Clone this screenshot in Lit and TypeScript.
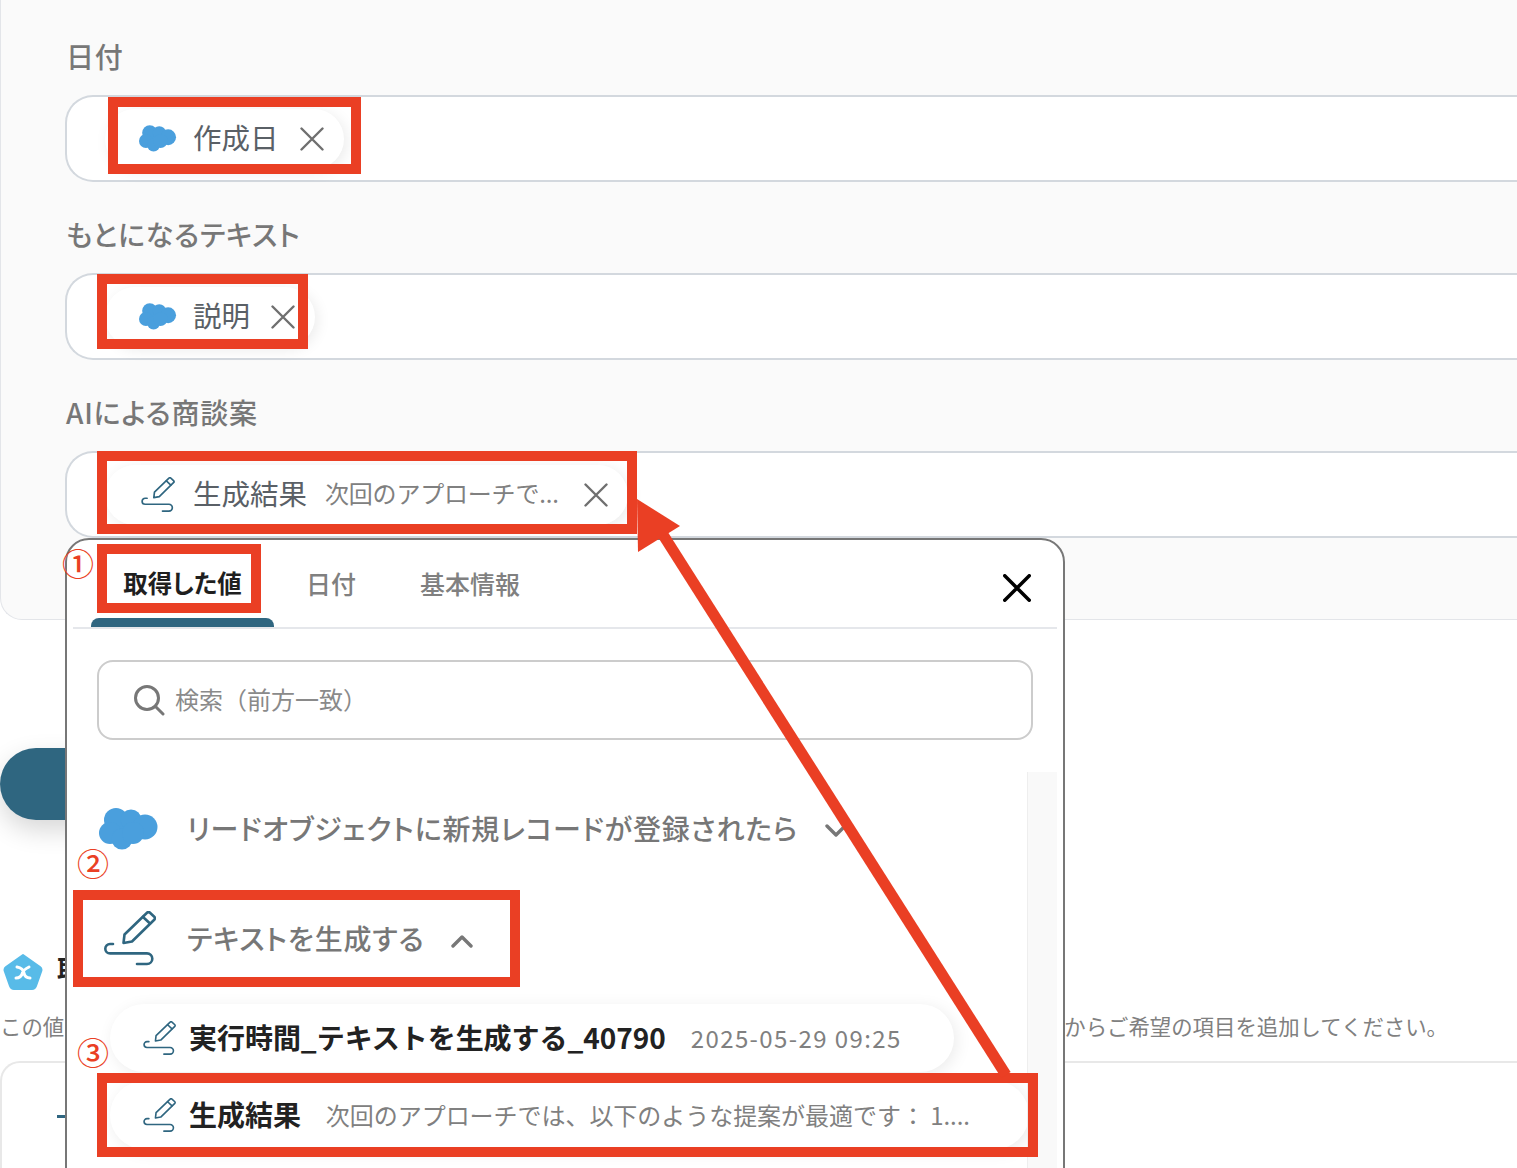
import { LitElement, html, css, svg } from "lit";
import { customElement } from "lit/decorators.js";

const cloud = (w: number, h: number) => html`<svg class="ico" width=${w} height=${h} viewBox="0 0 60 42" fill="#4a9fdd">
  <circle cx="17" cy="12" r="12"/><circle cx="32" cy="12" r="10.5"/><circle cx="46" cy="19" r="12.5"/>
  <circle cx="11" cy="25" r="11"/><circle cx="23" cy="31" r="10.5"/><circle cx="34" cy="25" r="11"/></svg>`;

const pen = (w: number, h: number, sw: number) => html`<svg class="ico pen" width=${w} height=${h} viewBox="0 0 52 56" fill="none" stroke="#2f6680" stroke-width=${sw} stroke-linecap="round" stroke-linejoin="round">
  <path d="M19.5 32 L28 30.5 L50.5 8.5 A2 2 0 0 0 50.5 6 L46 1.8 A2 2 0 0 0 43 1.8 L20.5 23.5 Z"/>
  <path d="M39 6 L46 12.5"/>
  <path d="M9 33 H6 A4.6 4.6 0 0 0 6 42.4 H43 A5.2 5.2 0 0 1 43 53 H33"/></svg>`;

const cross = (s: number, color: string, sw: number) => html`<svg class="ico x" width=${s} height=${s} viewBox="0 0 24 24" fill="none" stroke=${color} stroke-width=${sw} stroke-linecap="round"><path d="M1.5 1.5 L22.5 22.5 M22.5 1.5 L1.5 22.5"/></svg>`;

const chevron = (up: boolean) => html`<svg class="ico chev" width="22" height="14" viewBox="0 0 22 14" fill="none" stroke="#777" stroke-width="3.4" stroke-linecap="round" stroke-linejoin="round"><path d=${up ? "M2 12 L11 3 L20 12" : "M2 2 L11 11 L20 2"}/></svg>`;

@customElement("app-root")
export class AppRoot extends LitElement {
  static styles = css`
    :host { display: block; position: relative; width: 1517px; height: 1168px; overflow: hidden; background: #fff;
      font-family: "Noto Sans CJK JP", "Noto Sans", sans-serif; color: #777; }
    .ico { display: block; flex: none; }
    .panel { box-sizing: border-box; height: 620px; padding: 38px 0 0 65px; background: #fafafa; border: 1px solid #e3e5e9; border-top: 0; border-right: 0; border-bottom-left-radius: 22px; display: flex; flex-direction: column; gap: 34px; }
    .field { display: flex; flex-direction: column; gap: 19px; }
    .label { height: 38px; line-height: 36px; font-size: 28px; font-weight: 500; color: #777; font-feature-settings: "palt"; letter-spacing: .75px; }
    .input { box-sizing: border-box; margin-left: -1px; height: 87px; background: #fff; border: 2px solid #d3d8de; border-right: 0; border-radius: 28px 0 0 28px; padding: 0 0 0 38px; display: flex; align-items: center; }
    .chip { height: 60px; border-radius: 30px; background: #fff; box-shadow: 3px 3px 14px rgba(0,0,0,.08); padding: 0 20px 0 34px; display: flex; align-items: center; font-size: 28.5px; color: #5a6066; }
    .chip .name { margin-left: 16px; margin-bottom: 4px; white-space: nowrap; }
    .chip .detail { margin-left: 18px; margin-bottom: 4px; font-size: 24px; letter-spacing: -.2px; color: #808080; white-space: nowrap; }
    .chip .x { margin-left: 21px; }
    .chip .detail + .x { margin-left: 25px; }
    .chip .pen { margin-left: 2px; }
    .chip .pen + .name { margin-left: 18px; }

    .below { padding-top: 128px; }
    .cta { width: 400px; height: 72px; border-radius: 36px; background: #2f6680; box-shadow: 0 10px 26px rgba(0,0,0,.16); }
    .heading { display: flex; align-items: center; margin-top: 131px; height: 42px; padding-left: 3px; font-size: 26px; font-weight: 700; color: #222; gap: 14px; }
    .heading span { margin-bottom: 10px; }
    .note { display: flex; justify-content: space-between; margin-top: 17px; padding-right: 69px; height: 32px; line-height: 32px; font-size: 21.4px; color: #808080; white-space: nowrap; }
    .box { box-sizing: border-box; margin-top: 19px; height: 200px; border: 2px solid #e8e8e8; border-right: 0; border-radius: 20px 0 0 0; padding: 52px 0 0 55px; }
    .plus { width: 30px; height: 3px; background: #2f6680; }

    .pop { position: absolute; left: 65px; top: 538px; box-sizing: border-box; width: 1000px; height: 760px; background: #fff; border: 2px solid #777; border-radius: 24px 24px 0 0; display: flex; flex-direction: column; }
    .tabs { height: 87px; margin: 0 6px 0 6px; padding-left: 18px; border-bottom: 2px solid #e5e7eb; display: flex; align-items: stretch; position: relative; flex: none; }
    .tab { padding: 0 32px; height: 87px; box-sizing: border-box; padding-bottom: 2px; display: flex; align-items: center; font-size: 25px; font-weight: 500; color: #808080; position: relative; font-feature-settings: "palt"; }
    .tab.on { color: #1f1f1f; font-weight: 700; font-size: 24.5px; width: 183px; justify-content: center; padding: 0 0 2px; }
    .tab.on::after { content: ""; position: absolute; left: 0; right: 0; bottom: 0; height: 9px; background: #2f6680; border-radius: 8px 8px 0 0; }
    .close { position: absolute; right: 26px; top: 34px; }
    .search { box-sizing: border-box; flex: none; margin: 31px 30px 0 30px; width: 936px; height: 80px; border: 2px solid #ccc; border-radius: 16px; display: flex; align-items: center; padding-left: 34px; gap: 10px; font-size: 24px; color: #8a8a8a; }
    .search span { margin-bottom: 4px; }
    .body { flex: 1; margin: 32px 6px 0 0; display: flex; }
    .list { flex: 1; padding: 17px 0 0 0; display: flex; flex-direction: column; min-width: 0; }
    .track { width: 29px; flex: none; background: #f9f9f9; border-left: 1px solid #eee; }
    .group { height: 80px; display: flex; align-items: center; font-size: 28px; font-weight: 500; color: #777; white-space: nowrap; font-feature-settings: "palt"; letter-spacing: .85px; }
    .group .txt { margin-bottom: 3px; }
    .group.sf { padding-left: 32px; }
    .group.sf .txt { margin-left: 28px; }
    .group.ai { margin-top: 30px; padding-left: 37px; }
    .group.ai .txt { margin-left: 31px; }
    .group .chev { margin-left: 27px; margin-top: 4px; }
    .item { align-self: flex-start; height: 68px; border-radius: 34px; background: #fff; box-shadow: 3px 3px 16px rgba(0,0,0,.08); display: flex; align-items: center; padding-left: 33px; white-space: nowrap; color: #222; font-size: 28px; letter-spacing: -.04px; font-weight: 700; margin-left: 43px; }
    .item .ico { margin-right: 13px; }
    .item span { margin-bottom: 2px; }
    .item .v { margin-left: 25px; font-size: 24px; font-weight: 400; color: #808080; }
    .item .d { letter-spacing: 1.4px; }
    .item.a { margin-top: 25px; padding-right: 52px; }
    .item.b { margin-top: 9px; padding-right: 59px; }

    .mark { position: absolute; box-sizing: border-box; border: 10px solid #ea3f24; pointer-events: none; }
    .m1 { left: 108px; top: 97px; width: 253px; height: 77px; }
    .m2 { left: 97px; top: 274px; width: 211px; height: 75px; }
    .m3 { left: 97px; top: 451px; width: 540px; height: 83px; }
    .m4 { left: 97px; top: 544px; width: 164px; height: 69px; }
    .m5 { left: 73px; top: 890px; width: 447px; height: 97px; }
    .m6 { left: 97px; top: 1073px; width: 941px; height: 84px; }
    .num { position: absolute; width: 32px; height: 32px; line-height: 32px; text-align: center; font-size: 32px; font-weight: 500; color: #ea3f24; }
    .n1 { left: 62px; top: 546px; }
    .n2 { left: 77px; top: 846px; }
    .n3 { left: 77px; top: 1035px; }
    .arrow { position: absolute; left: 0; top: 0; pointer-events: none; }
  `;

  render() {
    return html`
      <div class="panel">
        <div class="field"><div class="label">日付</div>
          <div class="input"><div class="chip">${cloud(38, 27)}<span class="name">作成日</span>${cross(24, "#6f6f6f", 2.4)}</div></div></div>
        <div class="field"><div class="label">もとになるテキスト</div>
          <div class="input"><div class="chip">${cloud(38, 27)}<span class="name">説明</span>${cross(24, "#6f6f6f", 2.4)}</div></div></div>
        <div class="field"><div class="label">AIによる商談案</div>
          <div class="input"><div class="chip">${pen(34, 36, 2.6)}<span class="name">生成結果</span><span class="detail">次回のアプローチで...</span>${cross(24, "#6f6f6f", 2.4)}</div></div></div>
      </div>
      <div class="below">
        <div class="cta"></div>
        <div class="heading">
          <svg class="ico" width="40" height="38" viewBox="0 0 40 38"><path d="M20 2 L37 14 Q39 15.500 38.300 18 L33 33 Q32 36 29 36 H11 Q8 36 7 33 L1.700 18 Q1 15.500 3 14 Z" fill="#58bbe8" stroke="#58bbe8" stroke-width="2" stroke-linejoin="round"/><path d="M14 14 Q20 15 21 20 Q22 25 27 25 M26 14 Q20 17 19.500 20 Q18 25 13 25" fill="none" stroke="#fff" stroke-width="3" stroke-linecap="round"/></svg>
          <span>取得する値</span>
        </div>
        <div class="note"><span>この値</span><span>からご希望の項目を追加してください。</span></div>
        <div class="box"><div class="plus"></div></div>
      </div>

      <div class="pop">
        <div class="tabs">
          <div class="tab on">取得した値</div><div class="tab">日付</div><div class="tab">基本情報</div>
          <div class="close">${cross(28, "#000", 3)}</div>
        </div>
        <div class="search">
          <svg class="ico" width="32" height="32" viewBox="0 0 32 32" fill="none" stroke="#777" stroke-width="3" stroke-linecap="round"><circle cx="14" cy="14" r="11.500"/><path d="M23 23 L30 30"/></svg>
          <span>検索（前方一致）</span>
        </div>
        <div class="body">
          <div class="list">
            <div class="group sf">${cloud(60, 42)}<span class="txt">リードオブジェクトに新規レコードが登録されたら</span>${chevron(false)}</div>
            <div class="group ai">${pen(52, 56, 2.6)}<span class="txt">テキストを生成する</span>${chevron(true)}</div>
            <div class="item a">${pen(33, 35, 2.6)}<span>実行時間_テキストを生成する_40790</span><span class="v d">2025-05-29 09:25</span></div>
            <div class="item b">${pen(33, 35, 2.6)}<span>生成結果</span><span class="v">次回のアプローチでは、以下のような提案が最適です： 1....</span></div>
          </div>
          <div class="track"></div>
        </div>
      </div>

      <div class="mark m1"></div><div class="mark m2"></div><div class="mark m3"></div>
      <div class="mark m4"></div><div class="mark m5"></div><div class="mark m6"></div>
      <div class="num n1">①</div><div class="num n2">②</div><div class="num n3">③</div>
      <svg class="arrow" width="1517" height="1168" viewBox="0 0 1517 1168">
        ${svg`<path d="M660 530 L1006 1075" stroke="#ea3f24" stroke-width="11" fill="none"/><path d="M637 499 L680 526 L638 552 Z" fill="#ea3f24"/>`}
      </svg>
    `;
  }
}
